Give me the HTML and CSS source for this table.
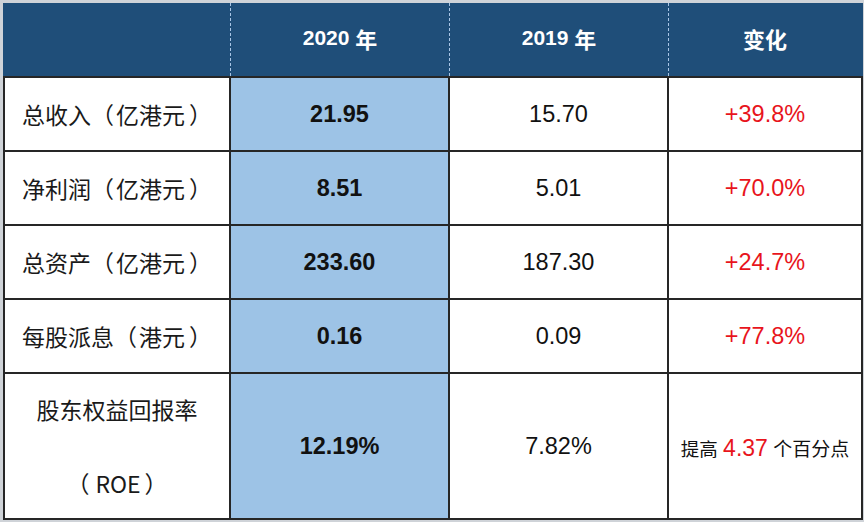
FILE: index.html
```html
<!DOCTYPE html>
<html lang="zh">
<head>
<meta charset="utf-8">
<title>财务摘要</title>
<link rel="stylesheet" href="styles.css">
</head>
<body>
<div class="sheet">
  <div class="head">
    <div class="hcell"></div>
    <div class="hcell">2020 <span class="cjk">年</span></div>
    <div class="hcell">2019 <span class="cjk">年</span></div>
    <div class="hcell last"><span class="cjk">变化</span></div>
  </div>
  <div class="body">
    <div class="cell label"><span>总收入<span class="po">（</span>亿港元<span class="pc">）</span></span></div>
    <div class="cell cur">21.95</div>
    <div class="cell num">15.70</div>
    <div class="cell num up">+39.8%</div>

    <div class="cell label"><span>净利润<span class="po">（</span>亿港元<span class="pc">）</span></span></div>
    <div class="cell cur">8.51</div>
    <div class="cell num">5.01</div>
    <div class="cell num up">+70.0%</div>

    <div class="cell label"><span>总资产<span class="po">（</span>亿港元<span class="pc">）</span></span></div>
    <div class="cell cur">233.60</div>
    <div class="cell num">187.30</div>
    <div class="cell num up">+24.7%</div>

    <div class="cell label"><span>每股派息<span class="po">（</span>港元<span class="pc">）</span></span></div>
    <div class="cell cur">0.16</div>
    <div class="cell num">0.09</div>
    <div class="cell num up">+77.8%</div>

    <div class="cell label center"><span>股东权益回报率<br><span class="po roe">（</span>ROE<span class="pc">）</span></span></div>
    <div class="cell cur">12.19%</div>
    <div class="cell num">7.82%</div>
    <div class="cell note"><span class="line"><span class="s1">提高</span> <span class="big">4.37</span> <span class="s2">个百分点</span></span></div>
  </div>
</div>
</body>
</html>
```
FILE: styles.css
```css
html, body {
  margin: 0;
  padding: 0;
  background: #cfd3d8;
}
body {
  width: 864px;
  height: 522px;
  overflow: hidden;
}
.sheet {
  margin: 3px 0 0 3px;
  width: 860px;
}
.head {
  display: grid;
  grid-template-columns: 228px 219px 219px 192px;
  height: 73px;
  background: #1f4e79;
}
.hcell {
  display: flex;
  align-items: center;
  justify-content: center;
  padding-bottom: 3px;
  border-right: 1px dashed #a9c6e6;
  color: #ffffff;
  font-family: "Liberation Sans", "Noto Sans CJK SC", sans-serif;
  font-weight: bold;
  font-size: 21px;
  white-space: pre;
}
.hcell.last {
  border-right: none;
}
.hcell .cjk {
  font-family: "Noto Sans CJK SC", sans-serif;
  font-weight: bold;
  font-size: 22px;
}
.body {
  display: grid;
  grid-template-columns: 224px 217px 217px 192px;
  grid-template-rows: 72px 72px 72px 72px 144px;
  gap: 2px;
  padding: 2px;
  background: #262626;
  width: 856px;
}
.cell {
  background: #ffffff;
  display: flex;
  align-items: center;
  justify-content: center;
  color: #111111;
  font-family: "Liberation Sans", "Noto Sans CJK SC", sans-serif;
  font-size: 23.5px;
}
.cell.label {
  justify-content: flex-start;
  padding-left: 17px;
  font-family: "Noto Sans CJK SC", sans-serif;
  font-size: 23px;
  color: #1a1a1a;
}
.label .po {
  letter-spacing: 2px;
}
.label .po.roe {
  letter-spacing: 6px;
}
.label .pc {
  margin-left: 4px;
}
.cell.label.center {
  justify-content: center;
  padding-left: 0;
  text-align: center;
  line-height: 74px;
}
.cell.cur {
  background: #9dc3e6;
  font-weight: bold;
}
.cell.up {
  color: #e8141c;
}
.cell.note {
  font-family: "Noto Sans CJK SC", sans-serif;
}
.note .line {
  white-space: pre;
}
.note .s1 {
  font-size: 18.5px;
}
.note .s2 {
  font-size: 19px;
}
.note .big {
  font-family: "Liberation Sans", sans-serif;
  font-size: 23px;
  color: #e8141c;
}
```
